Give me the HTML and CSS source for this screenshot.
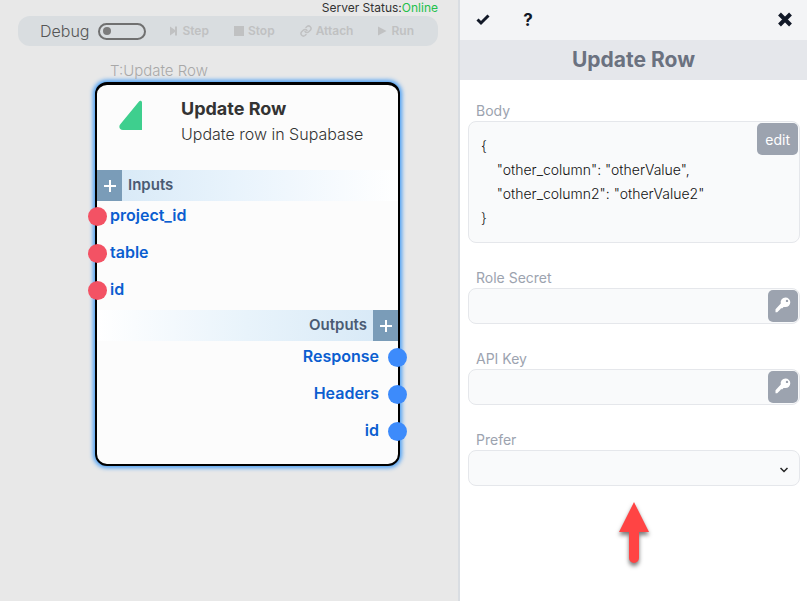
FILE: index.html
```html
<!DOCTYPE html>
<html lang="en">
<head>
<meta charset="utf-8">
<title>Update Row</title>
<link rel="stylesheet" href="styles.css">
</head>
<body>
<div class="app">
  <main class="canvas">
    <header class="canvas-head">
      <div class="status">Server Status:<span class="online">Online</span></div>
      <div class="toolbar">
        <label class="debug">Debug <input class="switch" type="checkbox"></label>
        <div class="actions">
          <button class="action" disabled><svg width="8" height="10" viewBox="0 0 8 10"><path d="M0 .5 5 4V.5h2v9H5V6L0 9.500z" fill="currentColor"/></svg>Step</button>
          <button class="action" disabled><svg width="10" height="10" viewBox="0 0 10 10"><path d="M0 0h10v10H0z" fill="currentColor"/></svg>Stop</button>
          <button class="action" disabled><svg width="12" height="12" viewBox="0 0 24 24" fill="none" stroke="currentColor" stroke-width="3" stroke-linecap="round"><path d="M10 13a5 5 0 0 0 7.500.500l3.500-3.500a5 5 0 0 0-7-7l-2 2M14 11a5 5 0 0 0-7.500-.500L3 14a5 5 0 0 0 7 7l2-2"/></svg>Attach</button>
          <button class="action" disabled><svg width="9" height="10" viewBox="0 0 9 10"><path d="M0 .5 8.500 5 0 9.500z" fill="currentColor"/></svg>Run</button>
        </div>
      </div>
    </header>
    <article class="node">
      <div class="node-tag">T:Update Row</div>
      <div class="node-card">
        <div class="node-head">
          <svg class="logo" width="24" height="30" viewBox="0 0 24 30"><path d="M20 1.500C21 .2 23 .8 23 2.500V30H4C.5 30-.8 26.500 1.500 24z" fill="#3ecf8e"/></svg>
          <div>
            <h2 class="node-title">Update Row</h2>
            <p class="node-desc">Update row in Supabase</p>
          </div>
        </div>
        <div class="band band-in">
          <button class="add" aria-label="Add input"><svg width="12" height="12" viewBox="0 0 12 12"><path d="M6 0v12M0 6h12" stroke="#fff" stroke-width="2"/></svg></button>
          <span>Inputs</span>
        </div>
        <ul class="ports ports-in">
          <li>project_id</li>
          <li>table</li>
          <li>id</li>
        </ul>
        <div class="band band-out">
          <span>Outputs</span>
          <button class="add" aria-label="Add output"><svg width="12" height="12" viewBox="0 0 12 12"><path d="M6 0v12M0 6h12" stroke="#fff" stroke-width="2"/></svg></button>
        </div>
        <ul class="ports ports-out">
          <li>Response</li>
          <li>Headers</li>
          <li>id</li>
        </ul>
      </div>
    </article>
  </main>
  <aside class="panel">
    <div class="panel-bar">
      <button class="tool" aria-label="Apply"><svg width="14" height="12" viewBox="0 0 14 12"><path d="M1.500 5.500 5 9 12.500 1.500" fill="none" stroke="currentColor" stroke-width="3"/></svg></button>
      <button class="tool" aria-label="Help"><b>?</b></button>
      <button class="tool close" aria-label="Close"><svg width="16" height="16" viewBox="0 0 16 16"><path d="m2.500 2 11 11M13.500 2l-11 11" stroke="currentColor" stroke-width="4"/></svg></button>
    </div>
    <h1 class="panel-title">Update Row</h1>
    <form class="form">
      <div class="field">
        <label for="body">Body</label>
        <div class="control">
          <textarea class="box code" id="body" rows="4">{
    "other_column": "otherValue",
    "other_column2": "otherValue2"
}</textarea>
          <button class="side" type="button">edit</button>
        </div>
      </div>
      <div class="field">
        <label for="role">Role Secret</label>
        <div class="control">
          <input class="box" id="role" type="text">
          <button class="side key" type="button" aria-label="Choose secret"><svg width="16" height="16" viewBox="0 0 16 16"><path fill="#fff" fill-rule="evenodd" d="M10.500.500a4.800 4.800 0 1 1 0 9.600H8.500L7.500 11.200H6L5 12.500 2.200 15.200H.500V12.200L5.800 6.500A4.800 4.800 0 0 1 10.500.500zM12 2.700a1.200 1.200 0 1 0 0 2.400 1.200 1.200 0 0 0 0-2.400z"/></svg></button>
        </div>
      </div>
      <div class="field">
        <label for="api">API Key</label>
        <div class="control">
          <input class="box" id="api" type="text">
          <button class="side key" type="button" aria-label="Choose key"><svg width="16" height="16" viewBox="0 0 16 16"><path fill="#fff" fill-rule="evenodd" d="M10.500.500a4.800 4.800 0 1 1 0 9.600H8.500L7.500 11.200H6L5 12.500 2.200 15.200H.500V12.200L5.800 6.500A4.800 4.800 0 0 1 10.500.500zM12 2.700a1.200 1.200 0 1 0 0 2.400 1.200 1.200 0 0 0 0-2.400z"/></svg></button>
        </div>
      </div>
      <div class="field">
        <label for="prefer">Prefer</label>
        <div class="control">
          <select class="box" id="prefer"><option></option></select>
          <svg class="chevron" width="8" height="6" viewBox="0 0 8 6"><path d="m.5 1 3.500 3.500L7.500 1" fill="none" stroke="#222" stroke-width="1.500"/></svg>
        </div>
      </div>
    </form>
    <svg class="arrow" width="32" height="62" viewBox="0 0 32 62"><path d="M16 0 31 30H21V56a5 5 0 0 1-10 0V30H1z" fill="#ff4444"/></svg>
  </aside>
</div>
</body>
</html>
```
FILE: styles.css
```css
* { box-sizing: border-box; }
body, h1, h2, p, ul { margin: 0; padding: 0; }
body { font-family: Inter, "Liberation Sans", sans-serif; color: #333; }
button, input, select, textarea { font: inherit; color: inherit; }
button { border: 0; background: none; padding: 0; }
svg { display: block; flex: none; }

.app { display: grid; grid-template-columns: 1fr 349px; min-height: 100vh; }

.canvas { position: relative; background: #e8e8e8; }
.canvas-head { padding: 0 20px 0 18px; }
.status { font-size: 12px; line-height: 16px; text-align: right; }
.online { color: #22c04a; }
.toolbar {
  display: flex; align-items: center; justify-content: space-between;
  height: 30px; padding: 0 24px 0 22px; border-radius: 12px; background: #d9dde0;
}
.debug { display: flex; align-items: center; gap: 9px; font-size: 16px; font-weight: 300; color: #555; }
.switch {
  appearance: none; display: flex; align-items: center;
  width: 48px; height: 17px; margin: 0; padding: 0 3px;
  border: 2px solid #707070; border-radius: 9px;
}
.switch::before { content: ""; width: 8px; height: 8px; border-radius: 50%; background: #7c7c7c; }
.actions { display: flex; gap: 25px; }
.action { display: flex; align-items: center; gap: 4px; font-size: 12px; line-height: 28px; font-weight: 600; color: #c0c1c2; }

.node { position: absolute; left: 95px; top: 60px; width: 305px; }
.node-tag { padding-left: 15px; font-size: 15px; line-height: 22px; font-weight: 300; color: #a8a8a8; }
.node-card {
  border: 2px solid #000; border-top-width: 3px; border-radius: 12px; background: #fcfcfc;
  box-shadow: 0 0 4px 2px #4a9ff5;
}
.node-head { display: flex; gap: 38px; height: 85px; padding: 11px 0 0 22px; }
.logo { margin-top: 4px; }
.node-title { font-size: 18px; line-height: 26px; font-weight: 700; }
.node-desc { font-size: 16px; line-height: 24px; font-weight: 300; }
.band { display: flex; height: 31px; line-height: 29px; font-size: 15px; font-weight: 600; color: #4b5b73; }
.band-in { gap: 6px; background: linear-gradient(90deg, #d6e8f6, #e8f3fc 45%, #fff); }
.band-out { gap: 6px; justify-content: flex-end; background: linear-gradient(270deg, #d6e8f6, #e8f3fb 50%, #fff); }
.add { display: grid; place-items: center; width: 25px; background: #7a9cb8; }
.ports { display: grid; gap: 9px; list-style: none; font-size: 16px; line-height: 28px; font-weight: 600; color: #0b5ed0; }
.ports li { position: relative; }
.ports li::after { content: ""; position: absolute; top: 6px; width: 19px; height: 19px; border-radius: 50%; }
.ports-in { padding: 0 0 7px 13px; }
.ports-in li::after { left: -22px; background: #f35264; }
.ports-out { padding: 1px 19px 20px 0; text-align: right; }
.ports-out li::after { right: -28px; background: #3d8bfb; }

.panel { border-left: 2px solid #d9dde2; background: #fff; }
.panel-bar { display: flex; align-items: center; gap: 21px; height: 40px; padding: 0 10px 0 11px; background: #f3f4f6; color: #111827; }
.tool { display: grid; place-items: center; width: 24px; height: 24px; font-size: 17px; }
.close { margin-left: auto; }
.panel-title { line-height: 40px; font-size: 21px; font-weight: 700; text-align: center; background: #e5e7eb; color: #6b7280; }
.form { display: grid; gap: 25px; padding: 21px 7px 0 8px; }
.field label { display: block; padding-left: 8px; font-size: 14px; line-height: 20px; color: #9ca3af; }
.control { position: relative; display: flex; }
.box {
  appearance: none; width: 100%; height: 36px; padding: 0 12px; border: 1px solid #e5e7eb;
  border-radius: 8px; background: #f9fafb; outline: 0;
}
.code { display: block; height: auto; padding: 12px; resize: none; font-size: 14px; line-height: 24px; font-weight: 300; color: #111; }
.side {
  position: absolute; top: 2px; right: 2px; height: 32px; padding: 0 8px;
  border-radius: 5px; background: #9ca3af; color: #fff; font-size: 14px;
}
.key { padding: 0 7px 2px; }
.chevron { position: absolute; right: 12px; top: 17px; }
.arrow { margin: 16px auto 0; filter: drop-shadow(0 3px 2px #0008); overflow: visible; }
```
